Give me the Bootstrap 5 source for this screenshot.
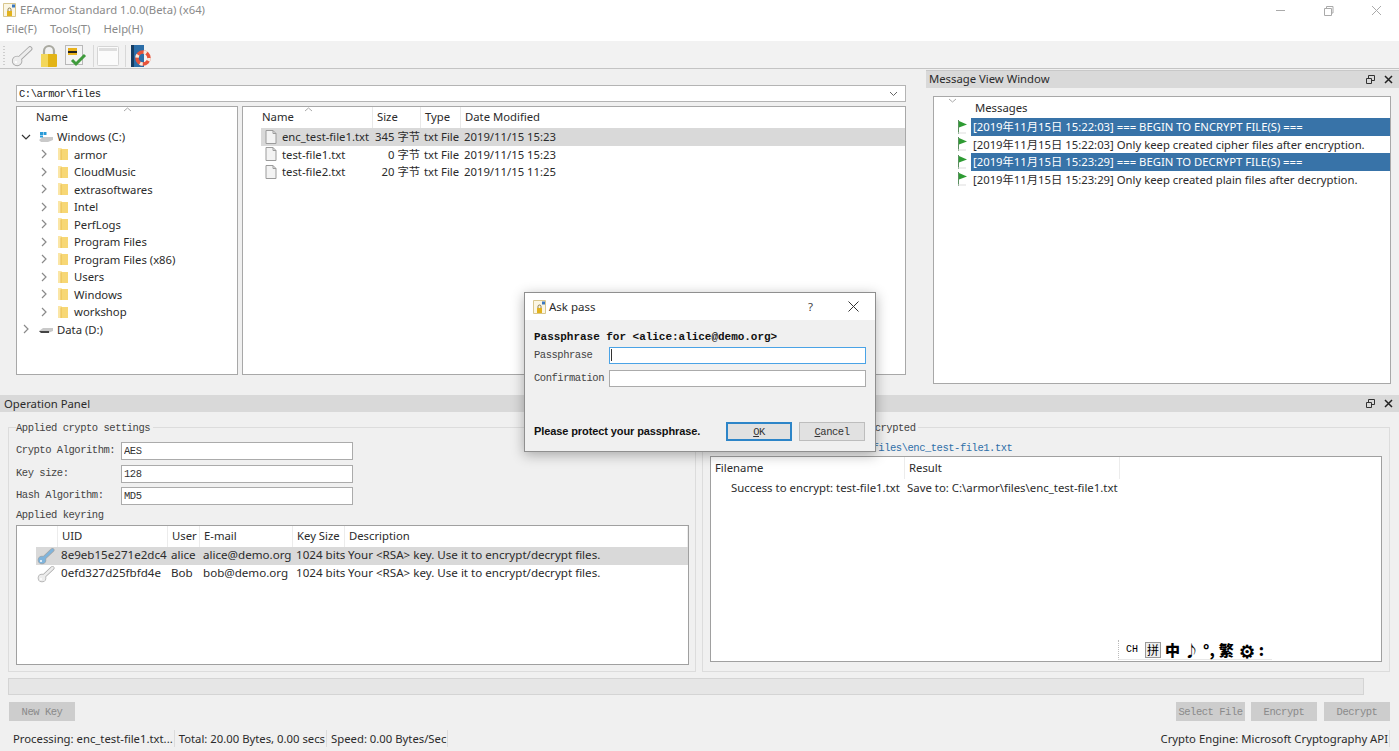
<!DOCTYPE html>
<html lang="en"><head><meta charset="utf-8"><title>EFArmor</title>
<link href="https://cdn.jsdelivr.net/npm/bootstrap@5.3.0/dist/css/bootstrap.min.css" rel="stylesheet">
<style>
html,body{margin:0;height:751px;overflow:hidden;background:#f0f0f0}
body{font-family:"Noto Sans","Noto Sans CJK SC",sans-serif;font-size:11.3px;color:#2b2b2b;line-height:17.5px}
.app{width:1399px;height:751px;position:relative;overflow:hidden}
.app svg{flex:none}
.app .form-control{transition:none}
.mono{font-family:"Liberation Mono","Noto Sans CJK SC",monospace;font-size:10.5px;letter-spacing:-.47px;color:#444}
.titlebar{height:20px;background:#fff;color:#8a8a8a;padding-left:3px;align-items:center}
.titlebar svg{margin-right:4px}
.wctl{margin-left:auto;gap:33px;padding-right:13px}
.menubar{height:21px;background:#fff;color:#8a8a8a;padding-left:6px;gap:13px}
.toolbar{height:28px;padding:2px 0 0 3px;gap:6px;border-bottom:1px solid #c4c4c4;background:#f2f2f2;align-items:center}
.tsep{width:1px;height:22px;background:#d8d8d8;margin-right:-3px}
.upper{height:326px}
.explorer{width:926px;padding:16px 20px 0 16px;flex:none}
.combo{height:17px;border:1px solid #b4b4b4;background:#fff;padding:1px 2px 0;line-height:15px;justify-content:space-between;align-items:center;margin-bottom:4px;color:#222}
.combo svg{margin-right:5px}
.panes{height:269px;gap:4px}
.pane{border:1px solid #a8a8a8;background:#fff;position:relative;height:100%}
.treepane{width:222px;flex:none}
.listpane{flex:1 1 0}
.sortmark{position:absolute;top:0;width:9px;height:5px}
.sm1{left:106px}.sm2{left:61px}.sm3{left:14px;top:1px}
.thead{height:21px;line-height:20px}
.treehead{padding-left:19px}
.trow{height:17.5px;line-height:17.5px;align-items:center;white-space:nowrap}
.chev{width:10px;flex:none;display:flex;justify-content:center}
.lv1{padding-left:22px}.lv0{padding-left:4px}
.lv1 .chev{margin-right:8px}
.lv1 svg.fld{margin-right:5px}
.lv0 .chev{margin-right:7px}
.lv0 svg.drv{margin-right:3px}
.flist{grid-template-columns:112px 48px 40px 1fr;padding-left:18px}
.flist>div{white-space:nowrap;overflow:visible;padding-left:4px}
.flist>div.hname{padding-left:1px}
.hcell{border-right:1px solid #e8e8e8}
.flist .sz{text-align:right;padding:0 1px 0 0}
.flist .dt{padding-left:3px}
.flist .ty{padding-left:3px}
.fname{margin-left:5px}
.sel{background:#d9d9d9}
.dock{flex:1 1 0;padding-top:1px}
.docktitle{height:18px;background:#d9d9d9;border-top:1px solid #c8c8c8;line-height:15px;padding:0 4px 0 3px;justify-content:space-between;align-items:center}
.docktitle>span:first-child{margin-top:-2px}
.dockbtns{gap:9px;padding-right:2px;align-items:center}
.msgbox{margin:8px 8px 0 7px;height:288px;border:1px solid #a8a8a8;background:#fff;position:relative}
.mhead{padding-left:41px;height:21px;line-height:22px}
.mrow{height:17.5px;line-height:17.5px;white-space:nowrap;display:flex}
.mflag{width:37px;flex:none;display:flex;justify-content:flex-end;padding-right:3px;align-items:center}
.mtxt{flex:1 1 0;padding-left:2px}
.mblue .mtxt{background:#3873a8;color:#fff}
.optitle{height:17px;background:#d9d9d9;line-height:17px;padding:0 4px;justify-content:space-between;align-items:center}
.opbody{height:260px;gap:6px;padding:0 9px 0 8px}
.opgroup{position:relative}
.opleft{width:688px;flex:none}
.opright{flex:1 1 0}
.gbox{position:absolute;top:15px;bottom:0;left:0;right:0;border:1px solid #dcdcdc}
.gcontent{position:relative;padding:9px 8px 0 8px}
.glegend{height:14px;line-height:14px;margin-bottom:7px}
.legendbg{background:#f0f0f0;padding:0 3px 0 0}
.frow{height:18px;margin-bottom:4.5px;align-items:center}
.flabel{width:105px;flex:none}
.fbox.form-control{width:232px;height:18px;min-height:18px;border:1px solid #ababab;border-radius:0;padding:0 2px;font:inherit;letter-spacing:inherit;background:#fff;color:#333;line-height:16px}
.keylegend{margin:-2px 0 3px}
.keybox{width:673px;height:140px;border:1px solid #a0a0a0;background:#fff;flex:none}
.keywrap{padding-left:8px}
.ktable{grid-template-columns:41px 110px 32px 93px 52px 1fr}
.ktable>div{white-space:nowrap;padding-left:3px}
.khead{height:21px;line-height:20px}
.khead>div{padding-left:4px;border-right:1px solid #ececec}
.ktable.krow{height:18px;line-height:16px;font-size:11.6px}
.kico{padding:0!important;display:flex;justify-content:flex-end;align-items:center}
.kspan{width:22px;height:18px;padding-right:3px}
.kselbg{background:#d9d9d9}
.resbox{height:206px;border:1px solid #a0a0a0;background:#fff;position:relative}
.rtable{grid-template-columns:194px 215px}
.rtable>div{white-space:nowrap;padding-left:4px}
.rhead{height:21px;line-height:22px}
.rhead>div{border-right:1px solid #ececec}
.rrow{line-height:20px;font-size:11.4px}
.rrow .c1{padding-left:20px}
.rrow .c2{padding-left:2px}
.rlegend{margin:0;padding-left:118px}
.pathlabel{color:#2f6fa8;padding-left:110px;height:15px;line-height:15px;margin-top:6px}
.ime{position:absolute;right:109px;bottom:1px;height:20px;width:154px;border-bottom:1px solid #e8e8e8;font-family:"Noto Sans CJK SC",sans-serif;color:#000;font-weight:700;align-items:center;gap:4px;padding-left:7px;border-left:1px dotted #bbb;background:#fff}
.ime b{font-size:15px;line-height:18px}
.ime b.gear{font-size:18px;margin-left:1px}
.imech{font-size:10px;font-weight:400;font-family:"Liberation Mono",monospace;margin-right:3px}
.imepy{border:1px solid #999;font-size:12px;line-height:14px;background:#eee;font-weight:400;padding:0 1px}
.progress-x{height:17px;margin:6px 35px 0 8px;background:#e6e6e6;border:1px solid #d4d4d4}
.actions{height:19px;margin-top:7px;padding:0 9px;align-items:center}
.btn.ghost{height:19px;padding:0;border-radius:0;border:0;background:#cdcdcd;color:#8a8a8a;font-family:"Liberation Mono",monospace;font-size:10.5px;letter-spacing:-.47px;line-height:20px;width:66px;opacity:1}
.btn.ghost.wide{width:69px}
.gap6{margin-left:6px}.gap7{margin-left:7px}
.spacer{flex:1 1 auto}
.statusbar{height:18px;margin-top:8px;padding:0 9px 0 9px;align-items:center;justify-content:space-between;white-space:nowrap}
.sitem{padding:0 1px 0 4px;border-right:1px solid #dcdcdc;line-height:17px}
.dialogbox{position:absolute;left:524px;top:292px;width:352px;height:160px;border:1px solid #8f8f8f;background:#f0f0f0;box-shadow:0 3px 12px rgba(0,0,0,.3)}
.dtitle{height:27px;background:#fff;align-items:center;padding:0 8px;font-size:11.5px;position:relative}
.dtitle svg.dico{margin-right:3px}
.dq{position:absolute;left:283px;top:5px;color:#444}
.dx{position:absolute;left:323px;top:8px}
.dbody{padding:10px 9px 0 9px}
.dhead{font-weight:700;color:#111;height:14px;line-height:14px;margin-bottom:2px;font-size:11px;letter-spacing:-.03px}
.drow{height:18px;margin-bottom:5px;align-items:center;position:relative}
.dlabel{width:75px;flex:none;padding-top:2px}
.dinput.form-control{width:257px;height:17px;min-height:17px;border:1px solid #ababab;border-radius:0;padding:0 2px;background:#fff;box-shadow:none}
.dinput.focused.form-control{border:1px solid #4aa3e6;outline:1px solid #4aa3e6;outline-offset:-1px}
.caretline{position:absolute;left:77px;top:3px;width:1px;height:12px;background:#333}
.dfoot{margin-top:35px;height:19px;align-items:center;justify-content:space-between;padding-right:1px}
.dprot{font-family:"Liberation Sans",sans-serif;font-weight:700;font-size:11px;letter-spacing:-.1px;color:#111}
.btn.dbtn{width:66px;height:19px;padding:0;border-radius:0;border:1px solid #bdbdbd;background:#e1e1e1;color:#333;font-family:"Liberation Mono",monospace;font-size:10.5px;line-height:18px;letter-spacing:-.47px}
.btn.dbtn.okb{border:2px solid #2d85c8;line-height:16px}
.dbtns{gap:7px}
u{text-underline-offset:1px}
</style></head>
<body>
<svg width="0" height="0" class="position-absolute">
<defs>
<symbol id="folder" viewBox="0 0 12 14"><path d="M1 1h3l1 1h6v11H1z" fill="#f7d775"/><path d="M1 1h3v12H1z" fill="#fbe6a6"/><path d="M4 2.500V13" stroke="#e9bd4e"/></symbol>
<symbol id="file" viewBox="0 0 12 14"><path d="M1 .5h7l3 3v10H1z" fill="#f3f3f3" stroke="#9b9b9b"/><path d="M8 .5v3h3" fill="none" stroke="#9b9b9b"/></symbol>
<symbol id="chevr" viewBox="0 0 8 10"><path d="M2 1l4 4-4 4" fill="none" stroke="#8a8a8a" stroke-width="1.200"/></symbol>
<symbol id="flag" viewBox="0 0 11 14"><path d="M1.500 0v14" stroke="#5b8f60"/><path d="M2 1l8 3.500-8 3z" fill="#2e9b33"/><path d="M1 13h8" stroke="#ddd"/></symbol>
<symbol id="key" viewBox="0 0 18 18"><path d="M7 11L15.500 3" stroke="#a5a5a5" stroke-width="4" stroke-linecap="round"/><circle cx="5" cy="13" r="4.300" fill="#a5a5a5"/><path d="M7 11L15.500 3" stroke="currentColor" stroke-width="2.600" stroke-linecap="round"/><circle cx="5" cy="13" r="3.600" fill="currentColor"/><circle cx="4" cy="14" r="1" fill="#fff"/></symbol>
<symbol id="appico" viewBox="0 0 13 14"><path d="M.5.500h12v13H.5z" fill="#fbf6e4" stroke="#d9c78e"/><path d="M9 1.500h3v3H9z" fill="#3a78c0"/><path d="M4 8h5v5H4z" fill="#e2b21d"/><path d="M5 8V6.500a1.500 1.500 0 013 0V8" fill="none" stroke="#8a7a4a"/></symbol>
</defs></svg>
<div class="app d-flex flex-column">
  <div class="titlebar d-flex">
    <svg width="13" height="14"><use href="#appico"/></svg><span>EFArmor Standard 1.0.0(Beta) (x64)</span>
    <div class="wctl d-flex align-items-center">
      <svg width="11" height="11"><path d="M1 5.500h9" stroke="#aaa"/></svg>
      <svg width="11" height="11"><path d="M1.500 3.500h7v7h-7z M3.500 3.500v-2h6.500v6.500h-1.500" fill="none" stroke="#aaa"/></svg>
      <svg width="11" height="11"><path d="M1 1l9 9M10 1l-9 9" stroke="#aaa"/></svg>
    </div>
  </div>
  <div class="menubar d-flex"><span>File(F)</span><span>Tools(T)</span><span>Help(H)</span></div>
  <div class="toolbar d-flex">
    <svg width="2" height="22"><path d="M1 1v20" stroke="#aaa" stroke-dasharray="1 2"/></svg>
    <svg width="22" height="22" viewBox="0 0 18 18" color="#ededed"><use href="#key"/></svg>
    <svg width="20" height="24" viewBox="0 0 20 24"><path d="M5 11V7a5 5 0 0110 0v4" fill="none" stroke="#a9a9a0" stroke-width="2.200"/><rect x="2" y="10" width="16" height="13" rx="1" fill="#e3b416"/><rect x="2" y="10" width="7" height="13" fill="#f3d75b"/></svg>
    <svg width="22" height="22" viewBox="0 0 22 22"><rect x=".5" y=".5" width="17" height="19" fill="#f4f4f4" stroke="#b9b9b9"/><rect x="3" y="3" width="9" height="7" fill="#e9b21b"/><rect x="3" y="6" width="9" height="2" fill="#222"/><path d="M7 15l4 4 9-9" fill="none" stroke="#3f9b3c" stroke-width="3"/></svg>
    <span class="tsep"></span>
    <svg width="22" height="20" viewBox="0 0 22 20"><rect x=".5" y=".5" width="21" height="19" rx="1" fill="#fbfbfb" stroke="#d5d5d5"/><rect x="2" y="2" width="18" height="3" fill="#dedede"/></svg>
    <span class="tsep"></span>
    <svg width="22" height="22" viewBox="-2 0 22 22"><rect width="13" height="22" fill="#2c6ea8"/><rect width="3" height="22" fill="#163d63"/><circle cx="12" cy="13" r="6" fill="none" stroke="#e8533a" stroke-width="3.500"/><circle cx="12" cy="13" r="6" fill="none" stroke="#f4ece2" stroke-width="3.500" stroke-dasharray="3 6.400"/></svg>
  </div>
  <div class="upper d-flex">
    <div class="explorer">
      <div class="combo mono d-flex"><span>C:\armor\files</span><svg width="9" height="6"><path d="M1 1l3.500 3.500L8 1" fill="none" stroke="#666"/></svg></div>
      <div class="panes d-flex">
        <div class="pane treepane">
          <svg class="sortmark sm1"><path d="M1 4l3.500-3L8 4" fill="none" stroke="#aaa"/></svg>
          <div class="thead treehead">Name</div>
          <div class="trow d-flex lv0"><span class="chev"><svg width="10" height="8"><path d="M1 2l4 4 4-4" fill="none" stroke="#333" stroke-width="1.200"/></svg></span><svg class="drv" width="16" height="12" viewBox="0 0 16 12"><path d="M1 9l4-3h10v3l-5 2H3z" fill="#c9c9c9"/><path d="M2 1h3v3H2z" fill="#2a9bd8"/><path d="M5.500 1h3v3h-3z" fill="#2a9bd8"/><path d="M2 4.500h3v2H2z" fill="#2a9bd8"/></svg><span>Windows (C:)</span></div>
          <div class="trow d-flex lv1"><span class="chev"><svg width="8" height="10"><use href="#chevr"/></svg></span><svg class="fld" width="12" height="14"><use href="#folder"/></svg><span>armor</span></div>
          <div class="trow d-flex lv1"><span class="chev"><svg width="8" height="10"><use href="#chevr"/></svg></span><svg class="fld" width="12" height="14"><use href="#folder"/></svg><span>CloudMusic</span></div>
          <div class="trow d-flex lv1"><span class="chev"><svg width="8" height="10"><use href="#chevr"/></svg></span><svg class="fld" width="12" height="14"><use href="#folder"/></svg><span>extrasoftwares</span></div>
          <div class="trow d-flex lv1"><span class="chev"><svg width="8" height="10"><use href="#chevr"/></svg></span><svg class="fld" width="12" height="14"><use href="#folder"/></svg><span>Intel</span></div>
          <div class="trow d-flex lv1"><span class="chev"><svg width="8" height="10"><use href="#chevr"/></svg></span><svg class="fld" width="12" height="14"><use href="#folder"/></svg><span>PerfLogs</span></div>
          <div class="trow d-flex lv1"><span class="chev"><svg width="8" height="10"><use href="#chevr"/></svg></span><svg class="fld" width="12" height="14"><use href="#folder"/></svg><span>Program Files</span></div>
          <div class="trow d-flex lv1"><span class="chev"><svg width="8" height="10"><use href="#chevr"/></svg></span><svg class="fld" width="12" height="14"><use href="#folder"/></svg><span>Program Files (x86)</span></div>
          <div class="trow d-flex lv1"><span class="chev"><svg width="8" height="10"><use href="#chevr"/></svg></span><svg class="fld" width="12" height="14"><use href="#folder"/></svg><span>Users</span></div>
          <div class="trow d-flex lv1"><span class="chev"><svg width="8" height="10"><use href="#chevr"/></svg></span><svg class="fld" width="12" height="14"><use href="#folder"/></svg><span>Windows</span></div>
          <div class="trow d-flex lv1"><span class="chev"><svg width="8" height="10"><use href="#chevr"/></svg></span><svg class="fld" width="12" height="14"><use href="#folder"/></svg><span>workshop</span></div>
          <div class="trow d-flex lv0"><span class="chev"><svg width="8" height="10"><use href="#chevr"/></svg></span><svg class="drv" width="16" height="12" viewBox="0 0 16 12"><path d="M1 8l4-3h10v3l-5 2H3z" fill="#c9c9c9"/><path d="M1 8h10v2H3z" fill="#444"/></svg><span>Data (D:)</span></div>
        </div>
        <div class="pane listpane">
          <svg class="sortmark sm2"><path d="M1 4l3.500-3L8 4" fill="none" stroke="#aaa"/></svg>
          <div class="d-grid flist thead"><div class="hcell hname">Name</div><div class="hcell">Size</div><div class="hcell">Type</div><div>Date Modified</div></div>
          <div class="d-grid flist trow"><div class="sel d-flex align-items-center"><svg width="12" height="14"><use href="#file"/></svg><span class="fname">enc_test-file1.txt</span></div><div class="sz sel">345 字节</div><div class="ty sel">txt File</div><div class="dt sel">2019/11/15 15:23</div></div>
          <div class="d-grid flist trow"><div class="d-flex align-items-center"><svg width="12" height="14"><use href="#file"/></svg><span class="fname">test-file1.txt</span></div><div class="sz">0 字节</div><div class="ty">txt File</div><div class="dt">2019/11/15 15:23</div></div>
          <div class="d-grid flist trow"><div class="d-flex align-items-center"><svg width="12" height="14"><use href="#file"/></svg><span class="fname">test-file2.txt</span></div><div class="sz">20 字节</div><div class="ty">txt File</div><div class="dt">2019/11/15 11:25</div></div>
        </div>
      </div>
    </div>
    <div class="dock">
      <div class="docktitle d-flex"><span>Message View Window</span>
        <span class="dockbtns d-flex"><svg width="9" height="9"><path d="M.5 3.500h5v5h-5z M2.500 3.500v-3h6v5h-3" fill="none" stroke="#333"/></svg><svg width="9" height="9"><path d="M1 1l7 7M8 1l-7 7" stroke="#222" stroke-width="1.500"/></svg></span></div>
      <div class="msgbox">
        <svg class="sortmark sm3"><path d="M1 1l3.500 3L8 1" fill="none" stroke="#aaa"/></svg>
        <div class="mhead">Messages</div>
        <div class="mrow mblue"><span class="mflag"><svg width="11" height="14"><use href="#flag"/></svg></span><span class="mtxt">[2019年11月15日 15:22:03] === BEGIN TO ENCRYPT FILE(S) ===</span></div>
        <div class="mrow"><span class="mflag"><svg width="11" height="14"><use href="#flag"/></svg></span><span class="mtxt">[2019年11月15日 15:22:03] Only keep created cipher files after encryption.</span></div>
        <div class="mrow mblue"><span class="mflag"><svg width="11" height="14"><use href="#flag"/></svg></span><span class="mtxt">[2019年11月15日 15:23:29] === BEGIN TO DECRYPT FILE(S) ===</span></div>
        <div class="mrow"><span class="mflag"><svg width="11" height="14"><use href="#flag"/></svg></span><span class="mtxt">[2019年11月15日 15:23:29] Only keep created plain files after decryption.</span></div>
      </div>
    </div>
  </div>
  <div class="opanel">
    <div class="optitle d-flex"><span>Operation Panel</span>
      <span class="dockbtns d-flex"><svg width="9" height="9"><path d="M.5 3.500h5v5h-5z M2.500 3.500v-3h6v5h-3" fill="none" stroke="#333"/></svg><svg width="9" height="9"><path d="M1 1l7 7M8 1l-7 7" stroke="#222" stroke-width="1.500"/></svg></span></div>
    <div class="opbody d-flex">
      <div class="opgroup opleft">
        <div class="gbox"></div>
        <div class="gcontent mono">
          <div class="glegend"><span class="legendbg">Applied crypto settings</span></div>
          <div class="frow d-flex"><span class="flabel">Crypto Algorithm:</span><input class="form-control fbox" value="AES" readonly></div>
          <div class="frow d-flex"><span class="flabel">Key size:</span><input class="form-control fbox" value="128" readonly></div>
          <div class="frow d-flex"><span class="flabel">Hash Algorithm:</span><input class="form-control fbox" value="MD5" readonly></div>
          <div class="glegend keylegend">Applied keyring</div>
        </div>
        <div class="keywrap position-relative">
        <div class="keybox">
          <div class="d-grid ktable khead"><div></div><div>UID</div><div>User</div><div>E-mail</div><div>Key Size</div><div>Description</div></div>
          <div class="d-grid ktable krow"><div class="kico"><span class="kselbg kspan d-flex justify-content-end align-items-center"><svg width="18" height="18" color="#7fb4dc"><use href="#key"/></svg></span></div><div class="kselbg">8e9eb15e271e2dc4</div><div class="kselbg">alice</div><div class="kselbg">alice@demo.org</div><div class="kselbg">1024 bits</div><div class="kselbg">Your &lt;RSA&gt; key. Use it to encrypt/decrypt files.</div></div>
          <div class="d-grid ktable krow"><div class="kico"><span class="kspan d-flex justify-content-end align-items-center"><svg width="18" height="18" color="#ececec"><use href="#key"/></svg></span></div><div>0efd327d25fbfd4e</div><div>Bob</div><div>bob@demo.org</div><div>1024 bits</div><div>Your &lt;RSA&gt; key. Use it to encrypt/decrypt files.</div></div>
        </div>
        </div>
      </div>
      <div class="opgroup opright">
        <div class="gbox"></div>
        <div class="gcontent">
          <div class="mono glegend rlegend"><span class="legendbg">Files encrypted</span></div>
          <div class="mono pathlabel">C:\armor\files\enc_test-file1.txt</div>
          <div class="resbox">
            <div class="d-grid rtable rhead"><div>Filename</div><div>Result</div></div>
            <div class="d-grid rtable rrow"><div class="c1">Success to encrypt: test-file1.txt</div><div class="c2">Save to: C:\armor\files\enc_test-file1.txt</div></div>
            <div class="ime d-flex"><span class="imech">CH</span><span class="imepy">拼</span><b>中</b><b>♪</b><b>°,</b><b>繁</b><b class="gear">⚙</b><b>:</b></div>
          </div>
        </div>
      </div>
    </div>
    <div class="progress-x"></div>
    <div class="actions d-flex"><button class="btn ghost" disabled>New Key</button><span class="spacer"></span><button class="btn ghost wide" disabled>Select File</button><button class="btn ghost gap6" disabled>Encrypt</button><button class="btn ghost gap7" disabled>Decrypt</button></div>
    <div class="statusbar d-flex">
      <div class="d-flex"><span class="sitem">Processing: enc_test-file1.txt...</span><span class="sitem">Total: 20.00 Bytes, 0.00 secs</span><span class="sitem">Speed: 0.00 Bytes/Sec</span></div>
      <span class="sitem">Crypto Engine: Microsoft Cryptography API</span>
    </div>
  </div>
  <div class="dialogbox" role="dialog">
    <div class="dtitle d-flex"><svg class="dico" width="13" height="14"><use href="#appico"/></svg><span>Ask pass</span><span class="dq">?</span><svg class="dx" width="11" height="11"><path d="M.5.500l10 10M10.500.500l-10 10" stroke="#333"/></svg></div>
    <div class="dbody mono">
      <div class="dhead">Passphrase for &lt;alice:alice@demo.org&gt;</div>
      <div class="drow d-flex"><span class="dlabel">Passphrase</span><input class="form-control dinput focused"><span class="caretline"></span></div>
      <div class="drow d-flex"><span class="dlabel">Confirmation</span><input class="form-control dinput"></div>
      <div class="dfoot d-flex"><span class="dprot">Please protect your passphrase.</span><span class="d-flex dbtns"><button class="btn dbtn okb"><u>O</u>K</button><button class="btn dbtn"><u>C</u>ancel</button></span></div>
    </div>
  </div>
</div>
<script src="https://cdn.jsdelivr.net/npm/bootstrap@5.3.0/dist/js/bootstrap.bundle.min.js"></script>
</body></html>
